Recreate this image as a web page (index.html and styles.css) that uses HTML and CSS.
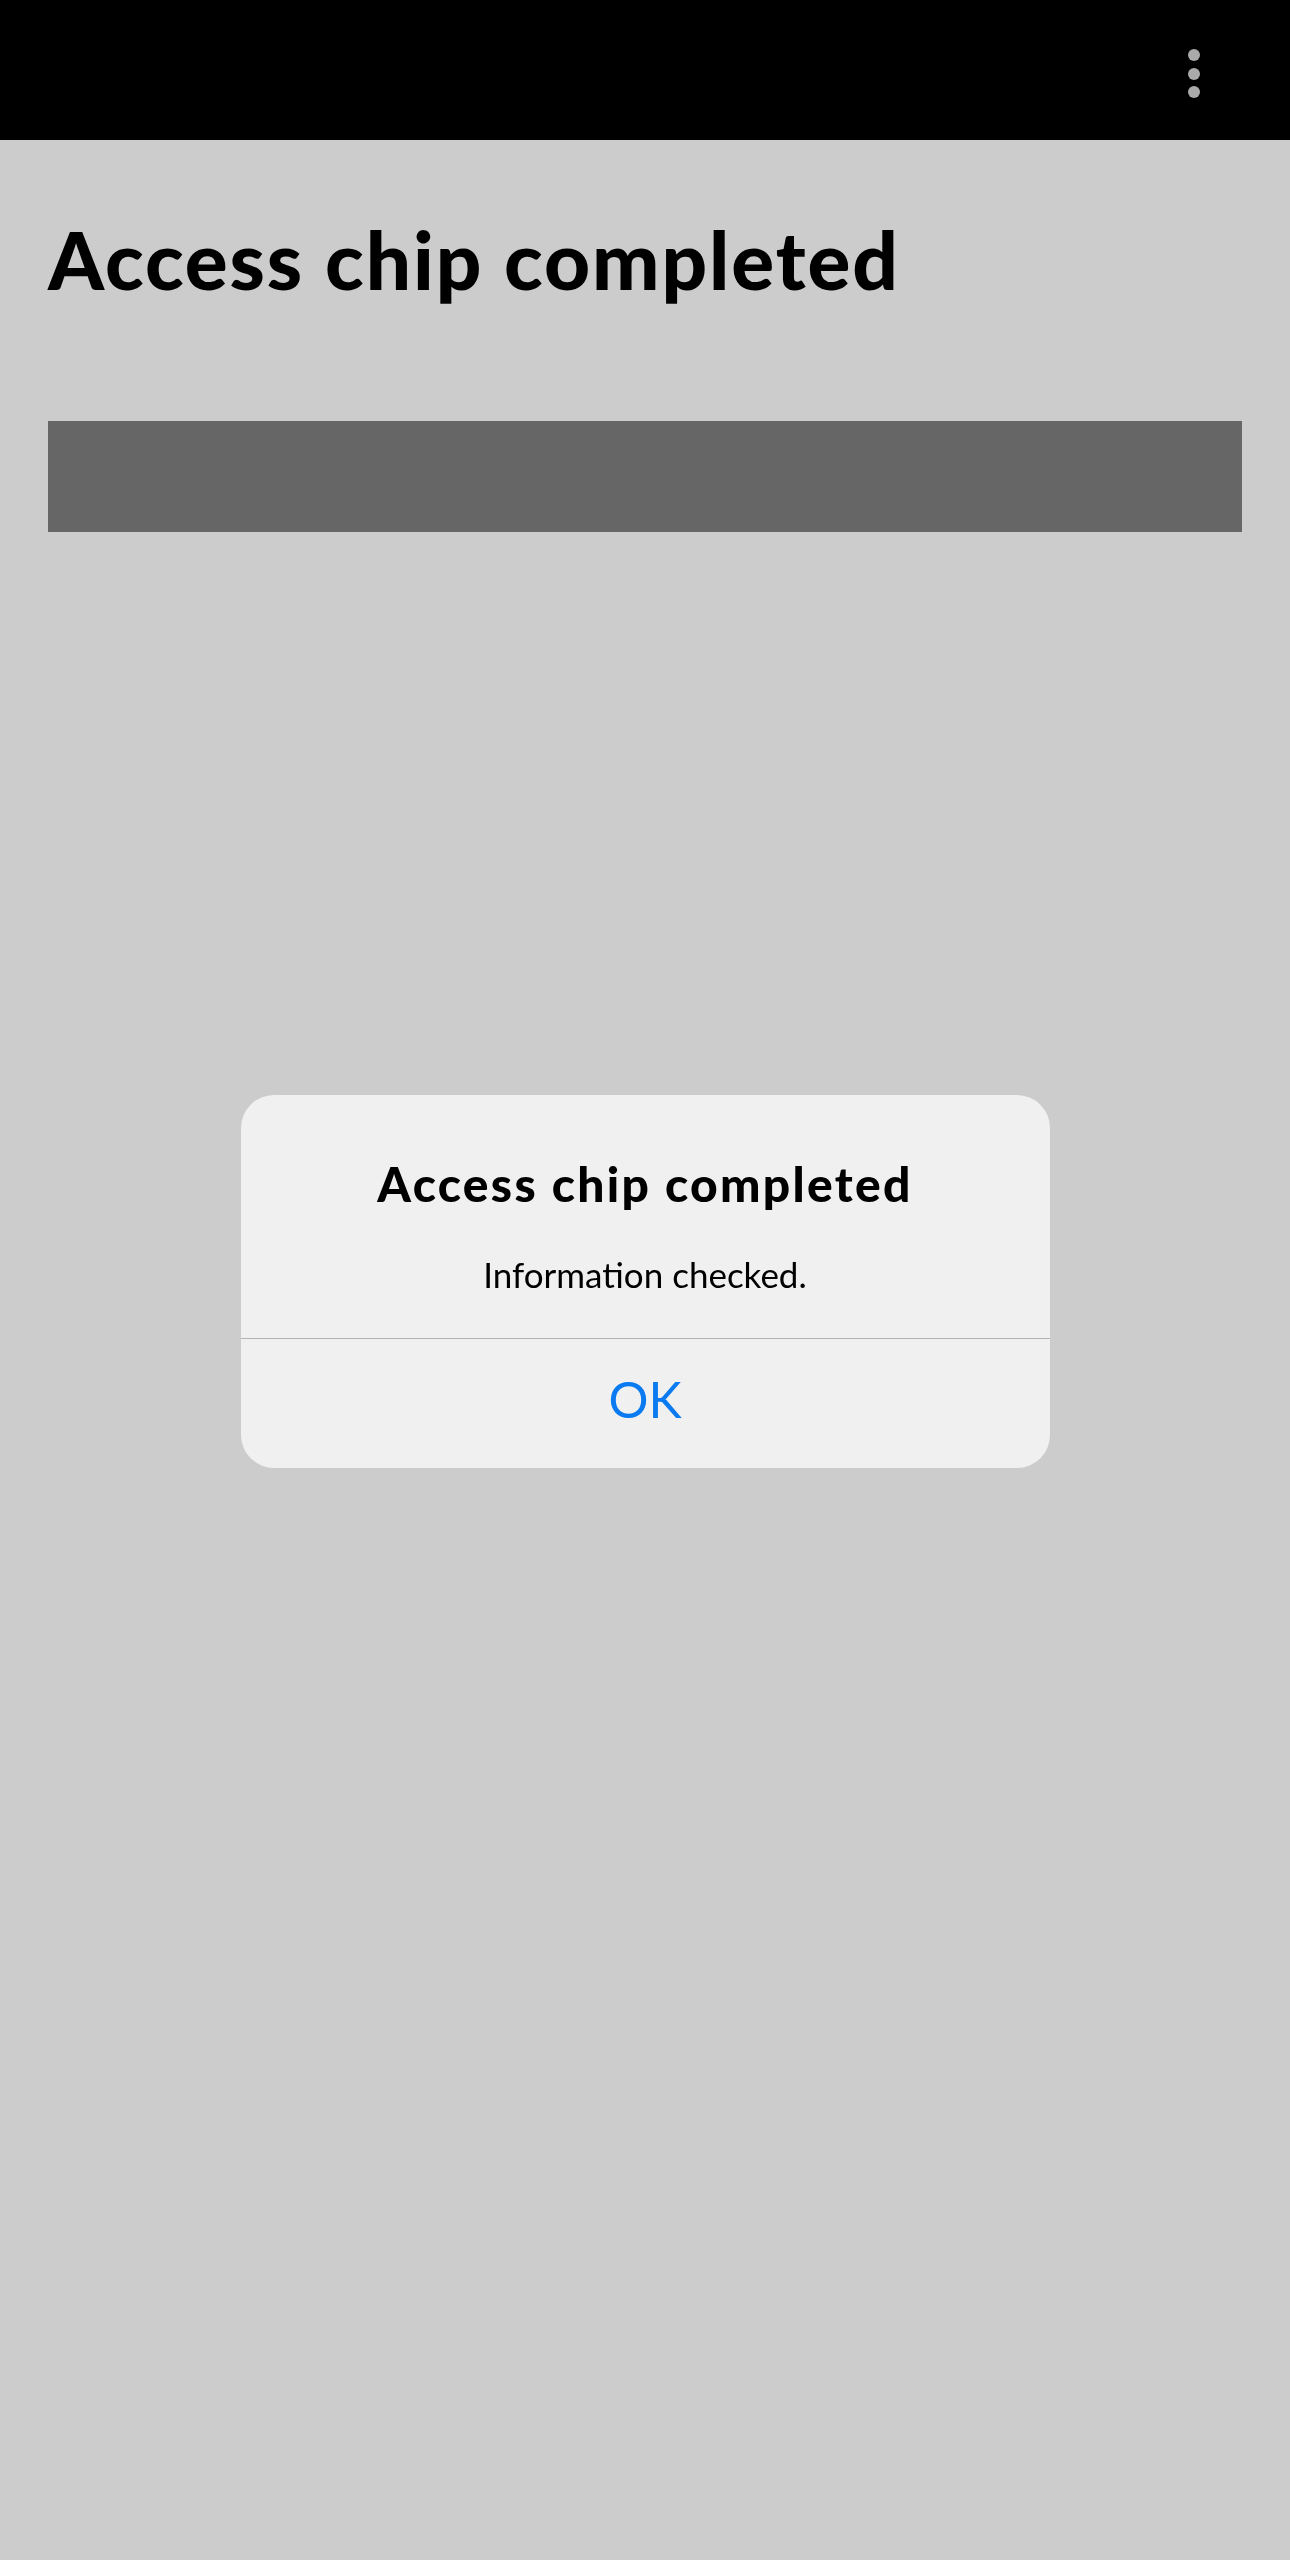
FILE: index.html
```html
<!DOCTYPE html>
<html>

<head>
    <meta charset="utf-8">
    <title>Access chip completed</title>
    <link rel="stylesheet" href="styles.css">
</head>

<body>
    <div id="app">
        <div class="top-bar">
            <div class="menu-dots">
                <span class="dot"></span>
                <span class="dot"></span>
                <span class="dot"></span>
            </div>
        </div>
        <div class="page-content">
            <h1 class="page-title">Access chip completed</h1>
            <div class="status-bar"></div>
        </div>
    </div>

    <div class="alert-overlay">
        <div class="alert-box">
            <div class="alert-body">
                <div class="alert-title">Access chip completed</div>
                <div class="alert-message">Information checked.</div>
            </div>
            <button class="alert-button">OK</button>
        </div>
    </div>
</body>

</html>
```

FILE: styles.css
```css
body {
    margin: 0;
    background-color: #ccc;
    font-family: Lato, "Liberation Sans", sans-serif;
    color: #000;
}

.top-bar {
    height: 140px;
    background: #000;
    display: flex;
    justify-content: flex-end;
    box-sizing: border-box;
    padding: 49px 90px 0 0;
}

.menu-dots {
    display: flex;
    flex-direction: column;
    gap: 6.5px;
}

.dot {
    display: block;
    width: 12px;
    height: 12px;
    border-radius: 50%;
    background: #aaa;
}

.page-content {
    padding: 0 48px;
}

.page-title {
    margin: 71px 0 114px;
    font-size: 80px;
    line-height: 1.2;
    font-weight: 900;
    letter-spacing: 1.9px;
}

.status-bar {
    height: 111px;
    background: #666;
}

.alert-overlay {
    position: fixed;
    top: 0;
    left: 0;
    right: 0;
    bottom: 0;
    display: flex;
    justify-content: center;
    align-items: center;
}

.alert-box {
    width: 809px;
    background: #f0f0f0;
    border-radius: 33px;
    overflow: hidden;
    display: flex;
    flex-direction: column;
    margin-top: 3px;
}

.alert-body {
    padding: 60px 40px 43px;
    text-align: center;
    border-bottom: 1px solid #b3b3b3;
}

.alert-title {
    font-size: 48px;
    line-height: 1.2;
    font-weight: 900;
    letter-spacing: 2.3px;
}

.alert-message {
    margin-top: 40px;
    font-size: 35px;
    line-height: 1.2;
}

.alert-button {
    border: 0;
    background: transparent;
    padding: 30px 0 39px;
    font-family: Lato, "Liberation Sans", sans-serif;
    font-size: 50px;
    line-height: 1.2;
    color: #0a7af0;
    cursor: pointer;
}
```
